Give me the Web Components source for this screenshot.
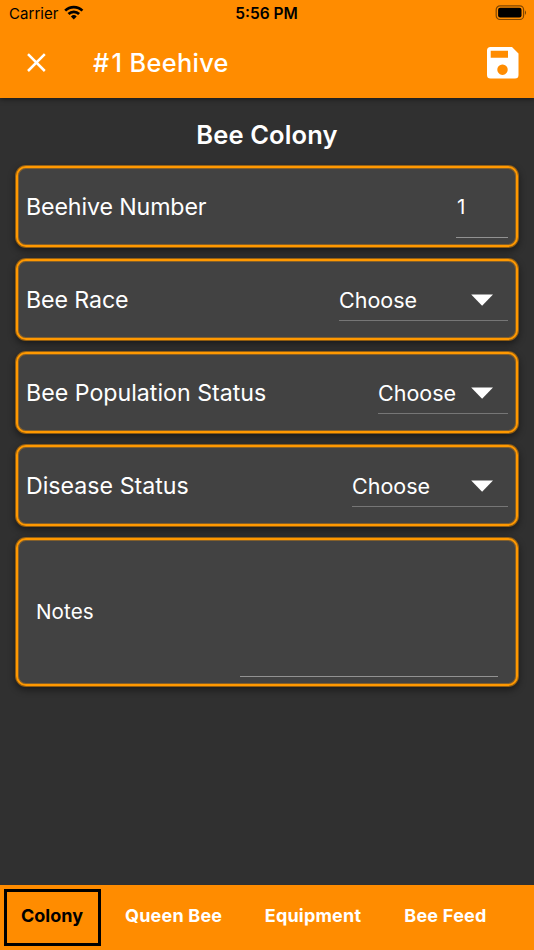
<!DOCTYPE html>
<html lang="en">
<head>
<meta charset="utf-8">
<title>#1 Beehive</title>
<style>
html,body{margin:0;height:100%;background:#303030}
body{font-family:Inter,"Liberation Sans",sans-serif;color:#fff;overflow:hidden}
</style>
</head>
<body>
<hive-screen></hive-screen>
<script>
function define(name, html) {
  const t = document.createElement('template');
  t.innerHTML = html;
  customElements.define(name, class extends HTMLElement {
    constructor() {
      super();
      this.attachShadow({ mode: 'open' }).append(t.content.cloneNode(true));
    }
  });
}

define('status-bar', `<style>
:host{display:grid;grid-template-columns:1fr auto 1fr;align-items:center;height:28px;padding:0 7px 0 9px;color:#000;font-size:15.5px;line-height:28px;box-sizing:border-box}
.l{display:flex;align-items:center;gap:6px;font-size:15px}
.l span{letter-spacing:.04px}
.t{font-weight:600;margin:0 3px 0 0}
.r{display:flex;justify-content:flex-end}
svg{display:block}
</style>
<div class="l"><span>Carrier</span><svg width="20" height="16" viewBox="0 0 20 16" style="margin-top:-2px"><g fill="none" stroke="#000" stroke-width="2.7"><path d="M1.2 5.6a12.2 12.2 0 0 1 17.2 0"/><path d="M4.5 9a7.5 7.5 0 0 1 10.6 0"/></g><path d="M6.9 11.4a4.1 4.1 0 0 1 5.8 0L9.8 14.5z"/></svg></div>
<span class="t">5:56 PM</span>
<div class="r"><svg width="32" height="16" viewBox="0 0 32 16" style="margin-top:-2px"><rect x="1.2" y=".9" width="27.4" height="13.6" rx="3.8" fill="none" stroke="#000" stroke-opacity=".5" stroke-width="1.2"/><rect x="3.1" y="2.8" width="23.4" height="9.8" rx="2" fill="#000"/><path d="M30 5.3q2 2.4 0 4.8z" fill-opacity=".55"/></svg></div>`);

define('app-bar', `<style>
:host{display:block;height:98px;background:#ff8c00;box-shadow:0 1px 5px rgba(0,0,0,.55);position:relative;flex:none}
.row{display:flex;align-items:center;height:69px;padding:0 10px 0 25px}
h1{margin:0 auto 0 44px;font-size:25.3px;font-weight:500;letter-spacing:.35px;line-height:32px}
svg{display:block}
</style>
<status-bar></status-bar>
<div class="row"><svg width="24" height="24" viewBox="0 0 24 24"><path d="M3 3.2l16.8 16.8M19.8 3.2L3 20" stroke="#fff" stroke-width="2.5"/></svg>
<h1><slot></slot></h1>
<svg width="44" height="42" viewBox="0 0 44 42"><path fill="#fff" fill-rule="evenodd" d="M10 5H32L38.5 11.5V33a3.5 3.5 0 0 1-3.5 3.5H10.5A3.5 3.5 0 0 1 7 33V8.5A3.5 3.5 0 0 1 10.5 5zM10.7 8.8v7h17.3v-7zM22.5 22.5a5.2 5.2 0 1 0 .01 0z"/></svg></div>`);

define('hive-card', `<style>
:host{display:flex;align-items:center;justify-content:space-between;box-sizing:border-box;height:81px;border:2px solid #ff9800;border-radius:10px;background:#424242;padding:1px 8px 0;box-shadow:0 0 0 1px rgba(255,152,0,.5),inset 0 0 0 1px rgba(255,152,0,.35),0 3px 7px 1px rgba(0,0,0,.45)}
.label{font-size:23.2px;line-height:30px;letter-spacing:var(--ls,0)}
:host([notes]){height:148px;padding:0 18px}
:host([notes]) .label{font-size:20.6px;letter-spacing:.1px}
</style>
<span class="label"><slot name="label"></slot></span><slot></slot>`);

define('choose-field', `<style>
:host{display:flex;align-items:center;justify-content:space-between;box-sizing:border-box;height:42px;border-bottom:1px solid #767676;font-size:21.5px;line-height:40px;padding-right:14px}
svg{display:block;margin-top:1px}
</style>
<span><slot></slot></span><svg width="24" height="12" viewBox="0 0 24 12"><path d="M1.2.5H23L12.1 11.7z" fill="#fff"/></svg>`);

define('text-field', `<style>
:host{display:block;box-sizing:border-box;border-bottom:1px solid #929292;font-size:20.6px;line-height:62px;padding-left:1px}
</style><slot></slot>`);

define('tab-item', `<style>
:host{display:flex;align-items:center;justify-content:center;box-sizing:border-box;height:57px;padding:0 17px 3px;font-size:18px;font-weight:700;line-height:24px}
:host([active]){border:3px solid #000;color:#000;width:97px;padding:0 1px 3px 0}
</style><slot></slot>`);

define('tab-bar', `<style>
:host{display:flex;align-items:flex-start;box-sizing:border-box;height:65px;padding:4px 4px;background:#ff8c00;margin-top:auto;flex:none;white-space:nowrap}
</style><slot></slot>`);

define('hive-screen', `<style>
:host{display:flex;flex-direction:column;height:950px;width:534px}
h2{margin:21px 0 15px;text-align:center;font-size:25.5px;font-weight:600;line-height:32px;letter-spacing:.12px}
main{display:flex;flex-direction:column;gap:12px;padding:0 16px}
</style>
<app-bar><span style="letter-spacing:2.4px">#</span>1 Beehive</app-bar>
<h2>Bee Colony</h2>
<main>
<hive-card style="--ls:-.12px"><span slot="label">Beehive Number</span><text-field style="width:52px;height:62px">1</text-field></hive-card>
<hive-card style="--ls:-.1px"><span slot="label">Bee Race</span><choose-field style="width:169px">Choose</choose-field></hive-card>
<hive-card><span slot="label">Bee Population Status</span><choose-field style="width:130px">Choose</choose-field></hive-card>
<hive-card><span slot="label">Disease Status</span><choose-field style="width:156px">Choose</choose-field></hive-card>
<hive-card notes><span slot="label">Notes</span><text-field style="width:258px;height:130px"></text-field></hive-card>
</main>
<tab-bar><tab-item active>Colony</tab-item><tab-item style="margin-left:7px;letter-spacing:.2px">Queen Bee</tab-item><tab-item style="margin-left:8.5px;letter-spacing:.2px">Equipment</tab-item><tab-item style="margin-left:9px;letter-spacing:.25px">Bee Feed</tab-item></tab-bar>`);
</script>
</body>
</html>
